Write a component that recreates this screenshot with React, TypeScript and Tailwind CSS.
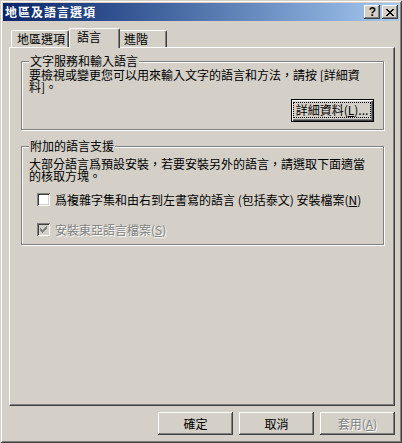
import { ReactNode } from 'react'

const CHECK = ['......#', '.....##', '#...###', '##.###.', '#####..', '.###...', '..#....']
const CROSS = ['##....##', '.##..##.', '..####..', '...##...', '..####..', '.##..##.', '##....##']

function Pixels({ rows, color }: { rows: string[]; color: string }): ReactNode {
  const w = rows[0].length
  const h = rows.length
  return (
    <svg width={w} height={h} viewBox={`0 0 ${w} ${h}`} shapeRendering="crispEdges">
      {rows.flatMap((row, y) =>
        row.split('').map((c, x) => (c === '#' ? <rect key={`${x}-${y}`} x={x} y={y} width={1} height={1} fill={color} /> : null))
      )}
    </svg>
  )
}

function CheckBox({ checked, disabled }: { checked?: boolean; disabled?: boolean }): ReactNode {
  return (
    <span
      className={
        disabled
          ? 'flex w-[13px] h-[13px] shrink-0 items-center justify-center bg-[#d4d0c8] shadow-[inset_1px_1px_0_#808080,inset_-1px_-1px_0_#ffffff,inset_2px_2px_0_#404040,inset_-2px_-2px_0_#d4d0c8]'
          : 'flex w-[13px] h-[13px] shrink-0 items-center justify-center bg-white shadow-[inset_1px_1px_0_#808080,inset_-1px_-1px_0_#ffffff,inset_2px_2px_0_#404040,inset_-2px_-2px_0_#d4d0c8]'
      }
    >
      {checked && <Pixels rows={CHECK} color={disabled ? '#808080' : '#000000'} />}
    </span>
  )
}

export default function App(): ReactNode {
  return (
    <div className="w-[402px] h-[443px] p-[3px] flex flex-col bg-[#d4d0c8] text-black text-[12px] leading-[12px] font-['Noto_Sans_CJK_TC',sans-serif] shadow-[inset_1px_1px_0_#d4d0c8,inset_-1px_-1px_0_#404040,inset_2px_2px_0_#ffffff,inset_-2px_-2px_0_#808080]">
      {/* Title bar */}
      <div className="h-[18px] flex items-center pl-[2px] pr-[1px] bg-linear-to-r from-[#0a246a] to-[#a6caf0]">
        <span className="flex-1 text-white font-bold tracking-[1px]">地區及語言選項</span>
        <div className="flex gap-[2px]">
          <button className="w-[16px] h-[14px] flex items-center justify-center pl-[1px] bg-[#d4d0c8] font-['Liberation_Sans',sans-serif] font-bold text-[12px] leading-none shadow-[inset_-1px_-1px_0_#404040,inset_1px_1px_0_#ffffff,inset_-2px_-2px_0_#808080]">
            ?
          </button>
          <button className="w-[16px] h-[14px] flex items-center justify-center bg-[#d4d0c8] shadow-[inset_-1px_-1px_0_#404040,inset_1px_1px_0_#ffffff,inset_-2px_-2px_0_#808080]">
            <Pixels rows={CROSS} color="#000000" />
          </button>
        </div>
      </div>

      <div className="flex-1 flex flex-col pl-[6px] pr-[4px]">
        {/* Tabs */}
        <div className="h-[26px] flex items-end pl-[2px]">
          <div className="w-[58px] h-[17px] pl-[5px] pt-[2px] border-t border-l border-white rounded-tl-[2px] shadow-[inset_-1px_0_0_#808080] border-r border-r-[#404040] rounded-tr-[2px]">
            地區選項
          </div>
          <div className="relative z-10 -mb-px w-[51px] h-[20px] pl-[7px] pt-[2px] bg-[#d4d0c8] border-t border-l border-white rounded-t-[2px] border-r border-r-[#404040] shadow-[inset_-1px_0_0_#808080]">
            語言
          </div>
          <div className="w-[47px] h-[17px] pl-[4px] pt-[2px] border-t border-white rounded-tr-[2px] border-r border-r-[#404040] shadow-[inset_-1px_0_0_#808080]">
            進階
          </div>
        </div>

        {/* Panel */}
        <div className="h-[359px] pl-[11px] pt-[7px] border-t border-l border-white border-r border-b border-r-[#404040] border-b-[#404040] shadow-[inset_-1px_-1px_0_#808080]">
          <fieldset className="w-[363px] h-[75px] pl-[7px] pr-[9px] border border-[#808080] shadow-[1px_1px_0_#ffffff,inset_1px_1px_0_#ffffff]">
            <legend className="px-[1px] bg-[#d4d0c8]">文字服務和輸入語言</legend>
            <p className="pt-[2px]">
              要檢視或變更您可以用來輸入文字的語言和方法，請按 [詳細資
              <br />
              料]。
            </p>
            <div className="flex justify-end mt-[6px]">
              <button className="w-[83px] h-[23px] flex pt-[2px] pr-[2px] pb-[3px] pl-[1px] border border-black bg-[#d4d0c8] shadow-[inset_1px_1px_0_#ffffff,inset_-1px_-1px_0_#404040,inset_-2px_-2px_0_#808080]">
                <span className="flex-1 flex items-center justify-center border border-dotted border-black">
                  詳細資料(<u className="underline-offset-1">L</u>)...
                </span>
              </button>
            </div>
          </fieldset>

          <fieldset className="mt-[10px] w-[363px] h-[105px] pl-[7px] pr-[9px] border border-[#808080] shadow-[1px_1px_0_#ffffff,inset_1px_1px_0_#ffffff]">
            <legend className="px-[1px] bg-[#d4d0c8]">附加的語言支援</legend>
            <p className="pt-[6px]">
              大部分語言爲預設安裝，若要安裝另外的語言，請選取下面適當
              <br />
              的核取方塊。
            </p>
            <label className="mt-[11px] ml-[8px] flex items-center gap-[5px]">
              <CheckBox />
              <span>
                爲複雜字集和由右到左書寫的語言 (包括泰文) 安裝檔案(<u className="underline-offset-1">N</u>)
              </span>
            </label>
            <label className="mt-[17px] ml-[8px] flex items-center gap-[5px]">
              <CheckBox checked disabled />
              <span className="text-[#808080] [text-shadow:1px_1px_0_#ffffff]">
                安裝東亞語言檔案(<u className="underline-offset-1">S</u>)
              </span>
            </label>
          </fieldset>
        </div>

        {/* Buttons */}
        <div className="mt-[6px] flex justify-end gap-[6px]">
          <button className="w-[75px] h-[23px] bg-[#d4d0c8] shadow-[inset_-1px_-1px_0_#404040,inset_1px_1px_0_#ffffff,inset_-2px_-2px_0_#808080]">
            確定
          </button>
          <button className="w-[75px] h-[23px] bg-[#d4d0c8] shadow-[inset_-1px_-1px_0_#404040,inset_1px_1px_0_#ffffff,inset_-2px_-2px_0_#808080]">
            取消
          </button>
          <button className="w-[75px] h-[23px] bg-[#d4d0c8] text-[#808080] [text-shadow:1px_1px_0_#ffffff] shadow-[inset_-1px_-1px_0_#404040,inset_1px_1px_0_#ffffff,inset_-2px_-2px_0_#808080]">
            套用(<u className="underline-offset-1">A</u>)
          </button>
        </div>
      </div>
    </div>
  )
}
